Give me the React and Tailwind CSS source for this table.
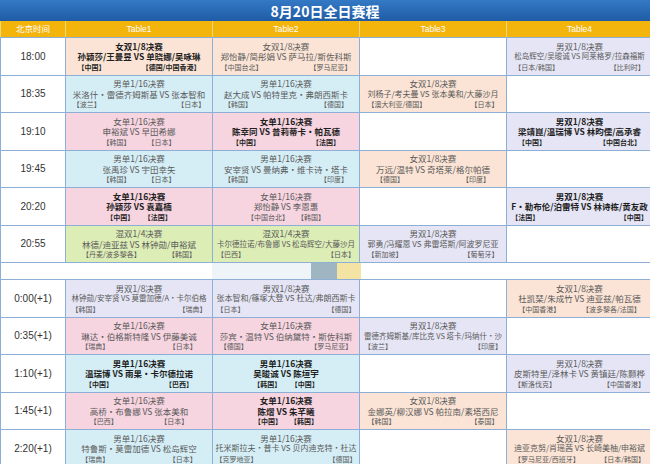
import React from "react";

// cell colours by event
const BG = {
  女双: "bg-[#fbe4d5]",
  男双: "bg-[#e5e5f5]",
  男单: "bg-[#d5eef6]",
  女单: "bg-[#f6d4e0]",
  混双: "bg-[#ddedb6]",
};

const SIZE = ["text-[8.5px]", "text-[8px]", "text-[7.5px]", "text-[7px]"];

// [title, playerA, playerB, countryA, countryB, bold, size]
const rows = [
  {
    time: "18:00",
    cells: [
      ["女双1/8决赛", "孙颖莎/王曼昱", "单晓娜/吴咏琳", "【中国】", "【德国/中国香港】", true],
      ["女双1/8决赛", "郑怡静/简彤娟", "萨马拉/斯佐科斯", "【中国台北】", "【罗马尼亚】"],
      null,
      ["男双1/8决赛", "松岛辉空/吴晙诚", "阿莱格罗/拉森福斯", "【日本/韩国】", "【比利时】", false, 2],
    ],
  },
  {
    time: "18:35",
    cells: [
      ["男单1/16决赛", "米洛什·雷德齐姆斯基", "张本智和", "【波兰】", "【日本】"],
      ["男单1/16决赛", "赵大成", "帕特里克·弗朗西斯卡", "【韩国】", "【德国】"],
      ["女双1/8决赛", "刘杨子/考夫曼", "张本美和/大藤沙月", "【澳大利亚/德国】", "【日本】", false, 1],
      null,
    ],
  },
  {
    time: "19:10",
    cells: [
      ["女单1/16决赛", "申裕斌", "早田希娜", "【韩国】", "【日本】"],
      ["女单1/16决赛", "陈幸同", "普莉蒂卡·帕瓦德", "【中国】", "【法国】", true],
      null,
      ["男双1/8决赛", "梁靖崑/温瑞博", "林昀儒/高承睿", "【中国】", "【中国台北】", true],
    ],
  },
  {
    time: "19:45",
    cells: [
      ["男单1/16决赛", "张禹珍", "宇田幸矢", "【韩国】", "【日本】"],
      ["男单1/16决赛", "安宰贤", "曼纳弗·维卡诗·塔卡", "【韩国】", "【印度】"],
      ["女双1/8决赛", "万远/温特", "奇塔莱/格尔帕德", "【德国】", "【印度】"],
      null,
    ],
  },
  {
    time: "20:20",
    cells: [
      ["女单1/16决赛", "孙颖莎", "袁嘉楠", "【中国】", "【法国】", true],
      ["女单1/16决赛", "郑怡静", "李恩惠", "【中国台北】", "【韩国】"],
      null,
      ["男双1/8决赛", "F·勒布伦/泊雷特", "林诗栋/黄友政", "【法国】", "【中国】", true],
    ],
  },
  {
    time: "20:55",
    cells: [
      ["混双1/4决赛", "林德/迪亚兹", "林钟勋/申裕斌", "【丹麦/波多黎各】", "【韩国】"],
      ["混双1/4决赛", "卡尔德拉诺/布鲁娜", "松岛辉空/大藤沙月", "【巴西】", "【日本】", false, 2],
      ["男双1/8决赛", "郭勇/冯耀恩", "弗雷塔斯/阿波罗尼亚", "【新加坡】", "【葡萄牙】", false, 1],
      null,
    ],
  },
  { sep: true },
  {
    time: "0:00(+1)",
    cells: [
      ["男双1/8决赛", "林钟勋/安宰贤", "莫雷加德/A·卡尔伯格", "【韩国】", "【瑞典】", false, 2],
      ["男双1/8决赛", "张本智和/篠塚大登", "杜达/弗朗西斯卡", "【日本】", "【德国】", false, 1],
      null,
      ["女双1/8决赛", "杜凯琹/朱成竹", "迪亚兹/帕瓦德", "【中国香港】", "【波多黎各/法国】"],
    ],
  },
  {
    time: "0:35(+1)",
    cells: [
      ["女单1/16决赛", "琳达·伯格斯特隆", "伊藤美诚", "【瑞典】", "【日本】"],
      ["女单1/16决赛", "莎宾·温特", "伯纳黛特·斯佐科斯", "【德国】", "【罗马尼亚】"],
      ["男双1/8决赛", "雷德齐姆斯基/库比克", "塔卡/玛纳什·沙", "【波兰】", "【印度】", false, 2],
      null,
    ],
  },
  {
    time: "1:10(+1)",
    cells: [
      ["男单1/16决赛", "温瑞博", "雨果·卡尔德拉诺", "【中国】", "【巴西】", true],
      ["男单1/16决赛", "吴晙诚", "陈垣宇", "【韩国】", "【中国】", true],
      null,
      ["男双1/8决赛", "皮斯特里/泽林卡", "黄镇廷/陈颢桦", "【斯洛伐克】", "【中国香港】"],
    ],
  },
  {
    time: "1:45(+1)",
    cells: [
      ["女单1/16决赛", "高桥·布鲁娜", "张本美和", "【巴西】", "【日本】"],
      ["女单1/16决赛", "陈熠", "朱芊曦", "【中国】", "【韩国】", true],
      ["女双1/8决赛", "金娜英/柳汉娜", "帕拉南/素塔西尼", "【韩国】", "【泰国】"],
      null,
    ],
  },
  {
    time: "2:20(+1)",
    cells: [
      ["男单1/16决赛", "特鲁斯·莫雷加德", "松岛辉空", "【瑞典】", "【日本】"],
      ["男单1/16决赛", "托米斯拉夫·普卡", "贝内迪克特·杜达", "【克罗地亚】", "【德国】", false, 1],
      null,
      ["女双1/8决赛", "迪亚克努/肖瑶茜", "长崎美柚/申裕斌", "【罗马尼亚/西班牙】", "【日本/韩国】", false, 1],
    ],
  },
];

const Match = ({ m }) => {
  if (!m) return <div className="bg-white h-[36.5px]" />;
  const [title, a, b, ca, cb, bold, size = 0] = m;
  return (
    <div
      className={`${BG[title.slice(0, 2)]} h-[36.5px] px-[2px] flex items-center justify-center overflow-hidden`}
    >
      <div
        className={`inline-flex flex-col text-center leading-[10.5px] ${
          bold ? "font-bold text-[#1f1f1f]" : "text-[#5a5a5a]"
        }`}
      >
        <div className="text-[8.5px]">{title}</div>
        <div className={`${SIZE[size]} whitespace-nowrap`}>
          {a} VS {b}
        </div>
        <div className="flex justify-between gap-2 text-[7px] whitespace-nowrap">
          <span>{ca}</span>
          <span>{cb}</span>
        </div>
      </div>
    </div>
  );
};

export default function App() {
  return (
    <div className="w-[650px] h-[464px] overflow-hidden bg-white font-['Noto_Sans_CJK_SC','Noto_Sans',sans-serif]">
      <div className="h-[21px] bg-linear-to-b from-[#3479c4] to-[#1f5ca5] flex items-center justify-center">
        <span className="text-white font-bold text-[14px] leading-none">8月20日全日赛程</span>
      </div>

      <div className="grid grid-cols-[64px_146px_146px_146px_145px] gap-px bg-[#f8d777] h-[16px] border-l border-[#f8d777]">
        {["北京时间", "Table1", "Table2", "Table3", "Table4"].map((h) => (
          <div
            key={h}
            className="bg-[#f3b40c] flex items-center justify-center text-white text-[8.5px] font-['Liberation_Sans','Noto_Sans_CJK_SC',sans-serif]"
          >
            {h}
          </div>
        ))}
      </div>

      <div className="grid grid-cols-[64px_146px_146px_146px_145px] gap-px pt-px bg-[#8eafd5] border-l border-[#8eafd5]">
        {rows.map((r, i) =>
          r.sep ? (
            <div key={i} className="col-span-5 h-[16px] bg-white flex">
              <div className="ml-[211px] w-[99px] bg-[#eff4f8]" />
              <div className="w-[26px] bg-[#9fb5c2]" />
              <div className="w-[24px] bg-[#f4e4a3]" />
            </div>
          ) : (
            <React.Fragment key={i}>
              <div className="bg-white h-[36.5px] flex items-center justify-center text-[10px] text-[#333] font-['Liberation_Sans',sans-serif]">
                {r.time}
              </div>
              {r.cells.map((m, j) => (
                <Match key={j} m={m} />
              ))}
            </React.Fragment>
          )
        )}
      </div>
    </div>
  );
}
